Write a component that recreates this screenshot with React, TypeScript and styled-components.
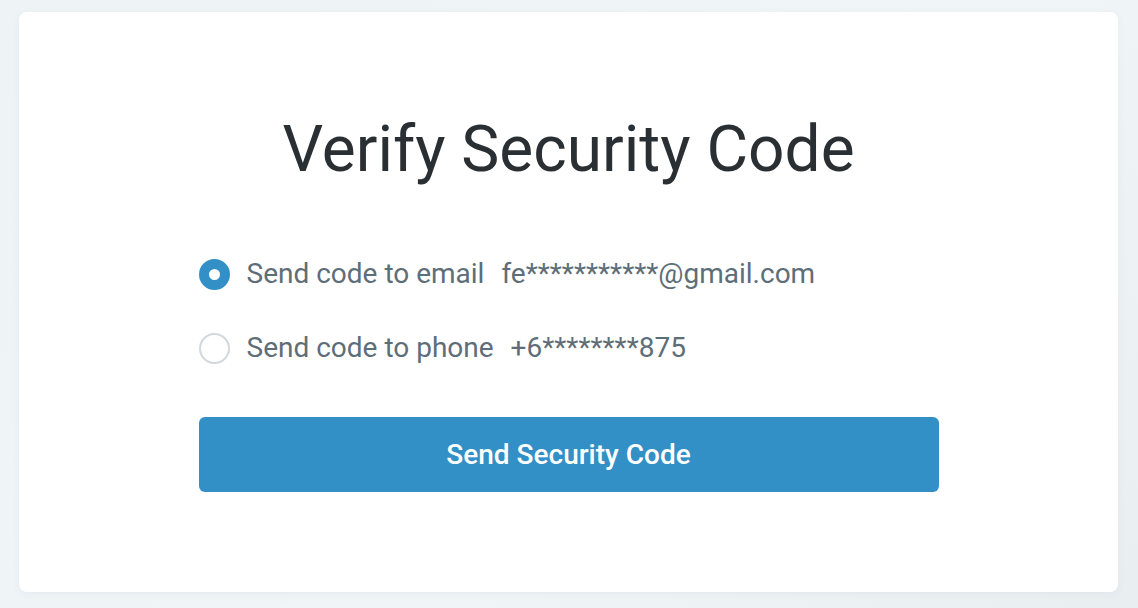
import React, { useState } from "react"
import styled, { createGlobalStyle } from "styled-components"

const GlobalStyle = createGlobalStyle`
  html, body {
    margin: 0;
    padding: 0;
    background: #eef3f6;
    font-family: Roboto, "Liberation Sans", sans-serif;
  }
  #root {
    min-height: 608px;
  }
`

const StyledPage = styled.div`
  display: flex;
  padding: 12px 20px 16px 19px;
  min-height: 608px;
  box-sizing: border-box;
  background: linear-gradient(135deg, #eef3f6 0%, #f0f5f8 60%, #e9eef1 100%);
`

const StyledCard = styled.div`
  flex: 1;
  display: flex;
  flex-direction: column;
  align-items: center;
  padding-top: 100px;
  background: #ffffff;
  border-radius: 8px;
  box-shadow: 0 2px 10px rgba(40, 60, 80, 0.05);
`

const StyledTitle = styled.h1`
  margin: 0;
  font-size: 64px;
  line-height: 76px;
  font-weight: 400;
  color: #2a2f33;
`

const StyledContent = styled.div`
  width: 740px;
  display: flex;
  flex-direction: column;
  margin-top: 70px;
`

const StyledOptions = styled.div`
  display: flex;
  flex-direction: column;
  gap: 42px;
`

const StyledOption = styled.label`
  display: flex;
  align-items: center;
  height: 32px;
  cursor: pointer;
`

const StyledRadio = styled.span<{ $checked: boolean }>`
  width: 31px;
  height: 31px;
  box-sizing: border-box;
  border-radius: 50%;
  flex-shrink: 0;
  background: #ffffff;
  border: ${({ $checked }) => ($checked ? "10px solid #3390c6" : "2px solid #d3d8dc")};
`

const StyledLabel = styled.span`
  margin-left: 17px;
  font-size: 28px;
  line-height: 32px;
  color: #5e6e78;
`

const StyledMasked = styled.span`
  margin-left: 17px;
`

const StyledButton = styled.button`
  margin-top: 53px;
  height: 75px;
  width: 100%;
  border: none;
  border-radius: 6px;
  background: #3390c6;
  color: #ffffff;
  font-family: Roboto, "Liberation Sans", sans-serif;
  font-size: 28px;
  font-weight: 500;
  cursor: pointer;
`

const options = [
  { id: "email", label: "Send code to email", value: "fe***********@gmail.com" },
  { id: "phone", label: "Send code to phone", value: "+6********875" },
]

export default function App() {
  const [selected, setSelected] = useState("email")

  return (
    <>
      <GlobalStyle />
      <StyledPage>
        <StyledCard>
          <StyledTitle>Verify Security Code</StyledTitle>
          <StyledContent>
            <StyledOptions>
              {options.map((option) => (
                <StyledOption key={option.id} onClick={() => setSelected(option.id)}>
                  <StyledRadio $checked={selected === option.id} />
                  <StyledLabel>
                    {option.label}
                    <StyledMasked>{option.value}</StyledMasked>
                  </StyledLabel>
                </StyledOption>
              ))}
            </StyledOptions>
            <StyledButton>Send Security Code</StyledButton>
          </StyledContent>
        </StyledCard>
      </StyledPage>
    </>
  )
}
